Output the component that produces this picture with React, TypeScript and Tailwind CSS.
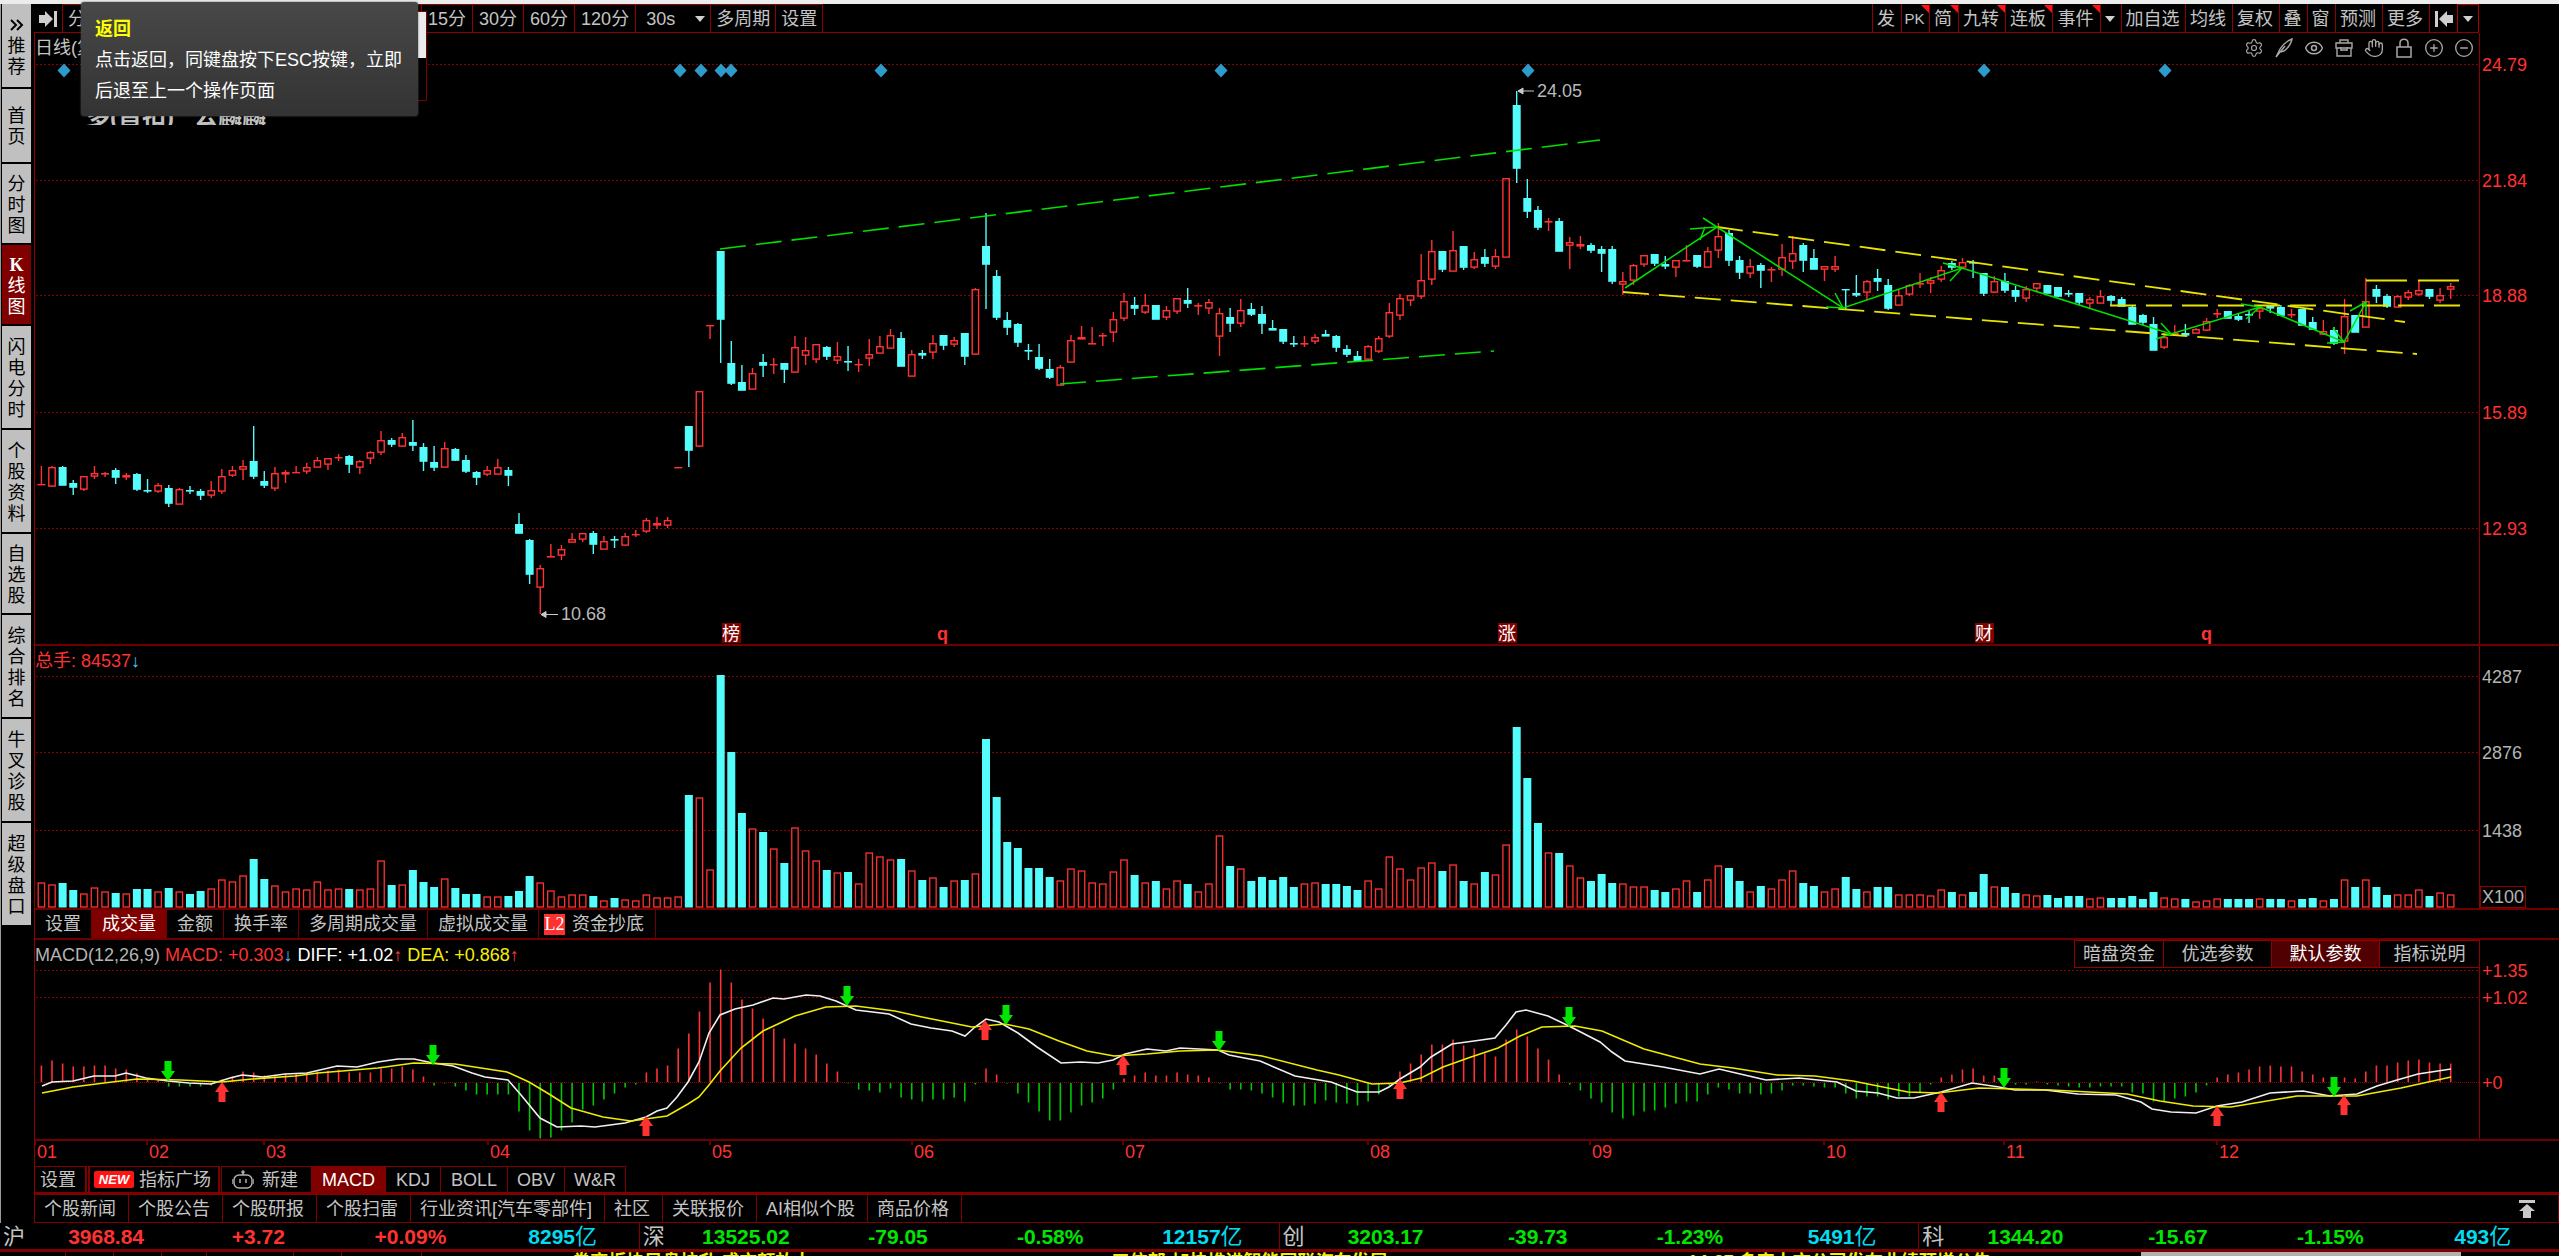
import React from 'react';
import { Eye, Hand, CirclePlus, CircleMinus, Settings } from 'lucide-react';

const RED = '#ff3232';
const CYAN = '#54fcfc';
const GRID = '#8a0000';

// [up, high, bodyTop, bodyBottom, low, volume, macd], all in plot units
type Bar = [number, number, number, number, number, number, number];

const bars: Bar[] = [
  [1, 466, 484, 484, 484, 25, 17], [1, 466, 467, 486, 487, 23, 22], [0, 466, 467, 485, 485, 24, 19], [0, 480, 483, 487, 495, 17, 16],
  [1, 476, 476, 489, 491, 14, 16], [1, 466, 473, 476, 479, 20, 17], [1, 472, 473, 474, 477, 16, 17], [0, 468, 470, 477, 484, 14, 14],
  [1, 473, 475, 477, 480, 14, 13], [0, 473, 474, 489, 491, 18, 9], [0, 479, 490, 491, 493, 18, 4], [1, 483, 485, 491, 493, 16, 2],
  [0, 485, 488, 503, 507, 19, -4], [1, 488, 489, 504, 504, 16, -4], [0, 486, 490, 491, 494, 13, -4], [0, 489, 491, 495, 500, 16, -4],
  [1, 481, 490, 495, 498, 19, -3], [1, 469, 476, 491, 494, 28, 3], [1, 466, 470, 475, 477, 26, 6], [1, 460, 466, 469, 480, 32, 11],
  [0, 426, 461, 476, 479, 48, 10], [0, 471, 481, 485, 488, 28, 7], [1, 467, 473, 488, 491, 22, 7], [1, 470, 472, 474, 483, 16, 9],
  [1, 466, 472, 472, 472, 19, 9], [1, 463, 467, 471, 474, 18, 10], [1, 457, 460, 467, 467, 26, 11], [1, 458, 458, 464, 470, 18, 12],
  [1, 454, 457, 457, 461, 19, 13], [0, 455, 456, 464, 473, 18, 10], [1, 460, 461, 467, 474, 18, 10], [1, 451, 452, 458, 464, 19, 10],
  [1, 431, 440, 452, 455, 47, 14], [0, 438, 440, 444, 447, 22, 14], [1, 433, 437, 446, 447, 23, 16], [0, 420, 442, 445, 451, 37, 13],
  [0, 443, 447, 461, 471, 25, 6], [0, 446, 462, 467, 471, 20, -3], [1, 442, 448, 467, 467, 29, -1], [0, 448, 449, 460, 461, 19, -4],
  [0, 455, 460, 471, 473, 13, -8], [0, 471, 472, 477, 485, 13, -12], [1, 466, 470, 474, 476, 11, -12], [1, 459, 467, 474, 474, 11, -12],
  [0, 467, 470, 475, 486, 11, -12], [0, 513, 524, 533, 533, 16, -29], [0, 539, 540, 574, 584, 31, -48], [1, 565, 568, 587, 614, 25, -56],
  [1, 544, 556, 557, 557, 17, -55], [1, 545, 549, 555, 560, 11, -48], [1, 533, 539, 542, 542, 13, -40], [1, 533, 533, 539, 542, 13, -27],
  [0, 531, 533, 544, 554, 11, -23], [1, 536, 541, 549, 549, 7, -17], [0, 536, 539, 540, 548, 9, -11], [1, 533, 536, 545, 545, 8, -5],
  [1, 530, 534, 534, 537, 7, -2], [1, 518, 520, 531, 533, 13, 10], [1, 517, 523, 525, 529, 10, 14], [1, 517, 520, 525, 528, 10, 17],
  [1, 467, 467, 467, 467, 11, 34], [0, 426, 426, 450, 467, 112, 49], [1, 391, 391, 446, 447, 110, 71], [1, 325, 325, 325, 339, 38, 100],
  [0, 251, 251, 319, 363, 232, 113], [0, 341, 363, 383, 385, 155, 100], [0, 365, 382, 390, 390, 94, 83], [1, 368, 373, 389, 389, 79, 74],
  [0, 354, 362, 365, 377, 75, 64], [1, 358, 364, 364, 374, 59, 54], [0, 363, 363, 369, 383, 44, 44], [1, 336, 347, 372, 372, 80, 39],
  [1, 337, 350, 355, 365, 57, 34], [1, 344, 344, 359, 363, 47, 28], [0, 346, 347, 356, 360, 37, 19], [1, 342, 356, 360, 364, 35, 11],
  [0, 346, 361, 362, 371, 35, -1], [1, 359, 364, 364, 372, 24, -7], [1, 339, 354, 358, 366, 55, -8], [1, 336, 346, 353, 353, 51, -10],
  [1, 329, 335, 348, 348, 48, -6], [0, 332, 338, 366, 366, 48, -15], [1, 350, 354, 376, 376, 37, -17], [0, 350, 353, 355, 359, 27, -19],
  [1, 335, 343, 352, 359, 30, -17], [0, 335, 335, 345, 350, 20, -17], [1, 337, 340, 344, 347, 27, -15], [0, 333, 333, 356, 365, 27, -19],
  [1, 288, 289, 354, 355, 34, -2], [0, 213, 246, 264, 309, 168, 14], [0, 270, 276, 317, 320, 110, 8], [0, 312, 320, 327, 335, 65, -1],
  [0, 323, 324, 342, 347, 59, -11], [0, 344, 350, 351, 360, 39, -20], [0, 344, 357, 368, 370, 39, -29], [0, 359, 369, 377, 379, 30, -38],
  [1, 365, 367, 385, 385, 27, -38], [1, 335, 340, 362, 362, 39, -30], [1, 326, 337, 339, 339, 37, -23], [1, 327, 343, 344, 344, 25, -20],
  [1, 333, 335, 336, 346, 24, -16], [1, 312, 319, 332, 342, 36, -7], [1, 293, 301, 318, 321, 48, 4], [0, 297, 305, 308, 315, 32, 7],
  [1, 294, 305, 312, 314, 25, 10], [0, 305, 305, 319, 319, 26, 7], [1, 306, 310, 317, 320, 19, 7], [1, 298, 298, 311, 314, 27, 10],
  [0, 288, 300, 303, 308, 23, 8], [1, 303, 305, 306, 315, 16, 7], [1, 299, 302, 308, 314, 24, 5], [1, 308, 313, 336, 356, 72, -1],
  [0, 308, 317, 323, 332, 41, -7], [1, 299, 310, 323, 327, 39, -7], [0, 303, 309, 314, 316, 26, -8], [0, 306, 314, 323, 334, 30, -11],
  [0, 320, 328, 330, 330, 27, -15], [0, 329, 329, 341, 344, 30, -20], [0, 336, 343, 344, 347, 20, -23], [1, 336, 343, 344, 347, 24, -23],
  [1, 334, 337, 341, 344, 25, -21], [0, 330, 334, 336, 336, 23, -18], [0, 335, 336, 347, 352, 23, -20], [0, 345, 349, 354, 357, 21, -21],
  [0, 351, 356, 361, 361, 17, -23], [1, 345, 346, 359, 360, 27, -19], [1, 336, 338, 351, 353, 19, -12], [1, 303, 312, 336, 338, 51, -3],
  [1, 294, 298, 315, 320, 39, 11], [1, 295, 295, 300, 306, 28, 19], [1, 254, 280, 296, 299, 40, 28], [1, 240, 251, 279, 285, 45, 38],
  [0, 251, 251, 269, 272, 36, 38], [1, 231, 250, 271, 271, 43, 43], [0, 246, 246, 267, 270, 26, 37], [1, 252, 259, 267, 269, 24, 34],
  [0, 249, 257, 263, 267, 35, 29], [1, 249, 256, 266, 269, 33, 26], [1, 178, 178, 257, 257, 63, 43], [0, 91, 105, 168, 183, 180, 53],
  [0, 179, 198, 211, 218, 129, 46], [0, 206, 210, 227, 230, 84, 34], [1, 218, 221, 222, 231, 55, 23], [0, 218, 221, 251, 251, 54, 8],
  [1, 237, 242, 245, 269, 42, -2], [1, 236, 244, 246, 249, 30, -8], [0, 243, 245, 250, 253, 26, -16], [0, 246, 249, 253, 272, 33, -20],
  [0, 246, 249, 281, 284, 24, -30], [1, 272, 281, 284, 295, 24, -36], [1, 264, 265, 280, 285, 21, -33], [1, 255, 255, 264, 267, 21, -29],
  [0, 254, 254, 263, 266, 17, -28], [0, 256, 264, 266, 269, 15, -25], [1, 260, 260, 267, 277, 19, -21], [1, 245, 260, 261, 261, 27, -19],
  [0, 255, 255, 266, 268, 15, -19], [1, 247, 251, 267, 267, 28, -12], [1, 223, 236, 250, 258, 42, -5], [0, 230, 233, 260, 266, 39, -7],
  [0, 256, 260, 272, 279, 26, -11], [1, 259, 266, 273, 278, 16, -11], [0, 263, 265, 270, 288, 21, -12], [1, 267, 269, 270, 282, 19, -11],
  [1, 244, 257, 269, 276, 28, -8], [1, 236, 253, 261, 269, 37, -3], [0, 243, 245, 260, 272, 24, -3], [0, 249, 258, 269, 269, 21, -4],
  [1, 266, 266, 269, 281, 16, -5], [1, 256, 266, 269, 272, 19, -5], [0, 289, 289, 289, 309, 30, -11], [0, 275, 293, 295, 297, 18, -16],
  [1, 280, 281, 292, 300, 16, -14], [0, 269, 278, 281, 291, 20, -14], [0, 279, 285, 308, 310, 20, -17], [1, 290, 295, 305, 305, 13, -14],
  [1, 284, 285, 294, 296, 13, -14], [1, 273, 283, 284, 288, 13, -10], [1, 277, 280, 283, 293, 12, -2], [1, 266, 270, 279, 282, 18, 5],
  [0, 261, 263, 267, 270, 15, 8], [1, 258, 262, 267, 268, 13, 13], [0, 260, 262, 263, 278, 15, 14], [0, 273, 273, 293, 296, 33, 7],
  [1, 276, 281, 292, 293, 21, 7], [0, 273, 281, 290, 293, 20, -2], [0, 286, 290, 296, 302, 14, -2], [1, 286, 289, 298, 302, 13, -2],
  [1, 283, 283, 288, 291, 12, 1], [0, 285, 285, 293, 293, 12, -2], [0, 287, 287, 296, 297, 9, -3], [0, 290, 293, 294, 297, 11, -4],
  [0, 293, 293, 302, 305, 11, -5], [1, 297, 299, 303, 308, 9, -5], [1, 290, 296, 303, 303, 10, -4], [0, 295, 296, 300, 305, 9, -4],
  [0, 297, 299, 306, 306, 9, -4], [0, 306, 307, 324, 324, 11, -10], [0, 314, 315, 322, 325, 8, -11], [0, 317, 324, 350, 350, 15, -19],
  [1, 333, 337, 347, 349, 10, -19], [1, 325, 333, 335, 335, 9, -16], [0, 324, 333, 335, 336, 8, -14], [1, 328, 329, 333, 333, 6, -10],
  [1, 318, 321, 330, 331, 7, -3], [1, 309, 313, 314, 318, 9, 5], [0, 311, 311, 318, 318, 8, 8], [0, 314, 316, 319, 321, 8, 10],
  [0, 310, 314, 315, 323, 8, 13], [1, 306, 308, 311, 319, 9, 16], [0, 306, 306, 308, 313, 8, 17], [0, 305, 307, 315, 315, 8, 16],
  [1, 309, 314, 315, 318, 7, 16], [0, 309, 309, 325, 325, 8, 11], [0, 317, 322, 329, 330, 9, 8], [1, 320, 331, 334, 335, 7, 5],
  [0, 327, 330, 343, 345, 8, 2], [1, 299, 316, 341, 354, 28, 5], [0, 315, 315, 332, 332, 20, 4], [1, 278, 301, 327, 327, 28, 11],
  [0, 285, 289, 296, 303, 20, 17], [0, 294, 296, 306, 308, 12, 17], [1, 295, 296, 307, 307, 13, 20], [1, 290, 292, 297, 300, 13, 22],
  [1, 280, 290, 294, 296, 18, 23], [0, 289, 289, 296, 299, 11, 20], [1, 288, 295, 300, 303, 15, 19], [1, 283, 286, 289, 299, 13, 19],
];

const barX = (i: number) => 41.4 + i * 10.6137;

const diff =
  '42,1086 52,1082 73,1081 94,1076 115,1076 126,1073 146,1078 168,1081 189,1083 211,1084 230,1078 242,1075 263,1077 285,1074 307,1073 337,1066 357,1067 378,1062 398,1059 414,1059 433,1063 453,1066 472,1073 485,1077 508,1080 521,1095 540,1118 557,1127 581,1126 595,1127 625,1123 646,1117 657,1111 667,1108 677,1097 688,1082 699,1062 709,1033 720,1015 735,1009 753,1005 773,998 784,999 806,995 820,996 836,1001 847,1006 856,1010 889,1014 911,1024 931,1028 952,1031 965,1036 975,1027 986,1019 999,1022 1018,1033 1037,1047 1061,1063 1081,1062 1098,1063 1113,1060 1125,1054 1147,1049 1166,1051 1180,1048 1218,1050 1229,1055 1260,1061 1295,1076 1331,1082 1357,1092 1379,1092 1389,1087 1400,1079 1420,1067 1431,1057 1452,1044 1474,1041 1495,1038 1506,1025 1516,1012 1526,1010 1548,1016 1569,1026 1600,1042 1612,1052 1625,1061 1663,1067 1700,1074 1719,1069 1736,1073 1766,1080 1799,1078 1837,1082 1856,1091 1878,1093 1897,1098 1914,1098 1941,1092 1972,1083 1999,1087 2015,1090 2045,1090 2078,1094 2116,1095 2141,1102 2152,1109 2171,1112 2196,1113 2217,1106 2242,1102 2270,1093 2303,1091 2330,1096 2357,1094 2377,1086 2397,1080 2418,1074 2451,1069';

const dea =
  '42,1093 73,1087 104,1083 137,1079 181,1080 222,1082 252,1079 295,1076 318,1073 378,1068 414,1063 455,1064 507,1072 529,1082 549,1094 571,1108 603,1117 631,1121 667,1116 688,1104 699,1097 709,1085 720,1071 741,1048 763,1031 795,1016 826,1007 856,1006 895,1011 922,1017 972,1027 1005,1024 1029,1029 1059,1041 1087,1051 1114,1056 1147,1054 1180,1051 1218,1050 1262,1056 1317,1070 1339,1075 1372,1084 1400,1083 1421,1078 1443,1067 1471,1057 1498,1048 1520,1036 1542,1027 1575,1026 1602,1031 1644,1049 1700,1064 1733,1068 1777,1075 1815,1076 1853,1081 1908,1092 1938,1093 1979,1088 2051,1090 2127,1094 2160,1101 2193,1106 2231,1107 2297,1096 2357,1096 2401,1088 2451,1077';

const sellMarks = [[168, 1081], [433, 1065], [847, 1006], [1006, 1025], [1219, 1051], [1569, 1027], [2004, 1088], [2334, 1097]];
const buyMarks = [[222, 1082], [646, 1116], [985, 1020], [1123, 1055], [1400, 1079], [1941, 1092], [2217, 1106], [2344, 1095]];
const diamonds = [64, 680, 701, 721, 731, 881, 1221, 1528, 1984, 2165];
const months: [string, number][] = [
  ['01', 35], ['02', 147], ['03', 264], ['04', 488], ['05', 710], ['06', 912], ['07', 1123], ['08', 1368], ['09', 1590], ['10', 1824], ['11', 2004], ['12', 2217],
];

const sideTabs = [
  { label: '首页', size: 'h-[75px]' },
  { label: '分时图', size: 'h-[81px]' },
  { label: 'K线图', size: 'h-[81px]', active: true },
  { label: '闪电分时', size: 'h-[104px]' },
  { label: '个股资料', size: 'h-[104px]' },
  { label: '自选股', size: 'h-[81px]' },
  { label: '综合排名', size: 'h-[104px]' },
  { label: '牛叉诊股', size: 'h-[104px]' },
  { label: '超级盘口', size: 'h-[104px]' },
];

const rightTools = [
  { label: '发', size: 'w-[29px]' },
  { label: 'PK', size: 'w-[28px]', hot: true, small: true },
  { label: '简', size: 'w-[29px]', hot: true },
  { label: '九转', size: 'w-[47px]', hot: true },
  { label: '连板', size: 'w-[47px]', hot: true },
  { label: '事件', size: 'w-[48px]', hot: true },
  { label: '▾', size: 'w-[21px]' },
  { label: '加自选', size: 'w-[64px]' },
  { label: '均线', size: 'w-[47px]' },
  { label: '复权', size: 'w-[47px]' },
  { label: '叠', size: 'w-[28px]' },
  { label: '窗', size: 'w-[28px]' },
  { label: '预测', size: 'w-[47px]' },
  { label: '更多', size: 'w-[47px]' },
];

const indices = [
  { name: '沪', last: '3968.84', chg: '+3.72', pct: '+0.09%', amount: '8295', up: true },
  { name: '深', last: '13525.02', chg: '-79.05', pct: '-0.58%', amount: '12157', up: false },
  { name: '创', last: '3203.17', chg: '-39.73', pct: '-1.23%', amount: '5491', up: false },
  { name: '科', last: '1344.20', chg: '-15.67', pct: '-1.15%', amount: '493', up: false },
];

const Caret = () => (
  <svg width="10" height="6" viewBox="0 0 10 6" fill="#d0d0d0"><path d="M0 0h10L5 6z" /></svg>
);

const GridLine = ({ y, dash = '2 2' }: { y: number; dash?: string }) => (
  <line x1="36" x2="2479" y1={y} y2={y} stroke={GRID} strokeDasharray={dash} shapeRendering="crispEdges" />
);

const Candle = ({ bar, x }: { bar: Bar; x: number }) => {
  const [up, high, top, bottom, low] = bar;
  const color = up ? RED : CYAN;
  const thin = bottom - top < 3;
  return (
    <g stroke={color} strokeWidth="1.4" fill="none">
      {high < top && <line x1={x} x2={x} y1={high} y2={top} />}
      {low > bottom && <line x1={x} x2={x} y1={bottom} y2={low} />}
      {thin ? (
        <rect x={x - 4} y={top} width="8" height={Math.max(1.4, bottom - top + 0.6)} fill={color} stroke="none" />
      ) : up ? (
        <rect x={x - 3.2} y={top + 0.7} width="6.4" height={bottom - top - 0.6} />
      ) : (
        <rect x={x - 4} y={top} width="8" height={bottom - top + 0.8} fill={color} stroke="none" />
      )}
    </g>
  );
};

const PriceChart = () => (
  <svg className="block w-full h-[581px]" viewBox="35 63 2444 581" preserveAspectRatio="none">
    {[64, 180, 295, 412, 528].map((y) => <GridLine key={y} y={y + 0.5} />)}
    {diamonds.map((x) => (
      <path key={x} d={`M${x} 63.5l6.5 7-6.5 7-6.5-7z`} fill="#2e9cca" />
    ))}
    {bars.map((bar, i) => <Candle key={i} bar={bar} x={barX(i)} />)}

    {/* trend channels */}
    <g stroke="#00e000" strokeWidth="1.6" strokeDasharray="26 10" fill="none">
      <path d="M720 249L1600 140" />
      <path d="M1060 384L1494 351" />
    </g>
    <g stroke="#e8e400" strokeWidth="1.8" strokeDasharray="26 10" fill="none">
      <path d="M1717 227L2405 322" />
      <path d="M1623 292L2417 354" />
      <path d="M2366 280.5H2464" strokeDasharray="41 11" />
      <path d="M2110 305.5H2461" strokeDasharray="26 10" />
    </g>
    <g stroke="#00e000" strokeWidth="1.5" fill="none">
      <path d="M1625 288L1717 227L1843 308L1962 268L2171 334L2260 307L2344 342L2366 302" />
      <path d="M1703 218L1717 227L1690 229M1700 240L1705 227" />
      <path d="M1835 293L1843 308L1826 307" />
      <path d="M1943 263L1962 268L1950 281" />
      <path d="M2161 323L2171 334L2156 339" />
      <path d="M2241 304L2260 307L2246 319" />
      <path d="M2333 328L2344 342L2327 343" />
      <path d="M2350 311L2366 302L2366 316" />
    </g>

    {/* extremes */}
    <g stroke="#c8c8c8" fill="#c8c8c8">
      <path d="M1518 91H1534M1518 91l5-3v6z" />
      <path d="M541 614.5H558M541 614.5l5-3v6z" />
    </g>
    <g fill="#b8b8b8" fontSize="18">
      <text x="1537" y="97">24.05</text>
      <text x="561" y="620">10.68</text>
    </g>

    {/* event badges */}
    {([['榜', 722], ['涨', 1498], ['财', 1975]] as [string, number][]).map(([t, x]) => (
      <g key={t}>
        <rect x={x} y="623" width="19" height="20" fill="#800000" />
        <text x={x} y="640" fontSize="18" fill="#fff">{t}</text>
      </g>
    ))}
    <g fill={RED} fontSize="18" fontWeight="700">
      <text x="937" y="640">q</text>
      <text x="2201" y="640">q</text>
    </g>
  </svg>
);

const VolumeChart = () => (
  <svg className="block w-full h-[236px]" viewBox="35 672 2444 236" preserveAspectRatio="none">
    {[676, 752, 830].map((y) => <GridLine key={y} y={y + 0.5} />)}
    {bars.map(([up, , , , , vol], i) =>
      up ? (
        <rect key={i} x={barX(i) - 3.2} y={908 - vol} width="6.4" height={vol - 1} fill="#000" stroke={RED} strokeWidth="1.3" />
      ) : (
        <rect key={i} x={barX(i) - 4} y={907 - vol} width="8" height={vol + 0.5} fill={CYAN} />
      ),
    )}
  </svg>
);

const MacdChart = () => (
  <svg className="block w-full h-[171px]" viewBox="35 968 2444 171" preserveAspectRatio="none">
    <GridLine y={970.5} />
    <GridLine y={997.5} />
    <GridLine y={1082.5} dash="1 1" />
    {bars.map((b, i) => (
      <line key={i} x1={barX(i)} x2={barX(i)} y1={b[6] > 0 ? 1082 : 1083} y2={1082.5 - b[6]} stroke={b[6] > 0 ? RED : '#00c800'} strokeWidth="1.6" />
    ))}
    <polyline points={diff} fill="none" stroke="#f0f0f0" strokeWidth="1.6" />
    <polyline points={dea} fill="none" stroke="#f0ec00" strokeWidth="1.6" />
    {sellMarks.map(([x, y]) => (
      <path key={x} d={`M${x} ${y}l-7-10h3.5v-10h7v10h3.5z`} fill="#00e600" />
    ))}
    {buyMarks.map(([x, y]) => (
      <path key={x} d={`M${x} ${y}l-7 10h3.5v10h7v-10h3.5z`} fill="#ff3232" />
    ))}
  </svg>
);

const Axis = ({ labels, top, height, className }: { labels: [string, number][]; top: number; height: number; className: string }) => (
  <svg width="79" height={height} viewBox={`0 ${top} 79 ${height}`} className={className} fontSize="18">
    {labels.map(([t, y]) => <text key={t} x="2" y={y + 7}>{t}</text>)}
  </svg>
);

const App = () => {
  return (
    <div className="h-screen overflow-hidden bg-black text-[#c4c4c4] text-[18px] leading-[24px] flex flex-col relative font-['Liberation_Sans','Noto_Sans_CJK_SC',sans-serif] whitespace-nowrap">
      <div className="h-1 shrink-0 bg-[#ececec]" />

      <div className="flex shrink-0">
        {/* Left navigation */}
        <nav className="w-[34px] shrink-0 border-l border-[#9a9a9a] pl-px">
          <button className="w-[29px] h-[85px] bg-[#c0c0c0] text-black border-b-2 border-black flex flex-col items-center justify-center leading-[21px]">
            <svg width="14" height="12" viewBox="0 0 14 12" fill="none" stroke="#000" strokeWidth="2" className="my-[5px]">
              <path d="M1 1l5 5-5 5M7 1l5 5-5 5" />
            </svg>
            <span>推</span>
            <span>荐</span>
          </button>
          {sideTabs.map((tab) => (
            <button
              key={tab.label}
              className={`w-[29px] ${tab.size} pt-[3px] flex flex-col items-center justify-center leading-[21px] border-b-2 border-black ${tab.active ? 'bg-[#800000] text-white' : 'bg-[#c0c0c0] text-black'}`}
            >
              {tab.label.split('').map((ch, i) => (
                <span key={i} className={ch === 'K' ? "font-['Liberation_Serif',serif] font-bold" : ''}>{ch}</span>
              ))}
            </button>
          ))}
        </nav>

        <div className="flex-1 min-w-0">
          {/* Toolbar */}
          <div className="h-[29px] flex justify-between pr-[80px] relative">
            <div className="absolute inset-x-0 bottom-0 mr-[80px] border-b border-[#900000]" />
            <div className="flex">
              <button aria-label="展开" className="w-[28px] pl-[5px]">
                <svg width="19" height="18" viewBox="0 0 19 18" fill="#cfcfcf"><path d="M0 5h6V1l8 8-8 8v-4H0zM15 1h3v16h-3z" /></svg>
              </button>
              <button className="w-[359px] text-left pl-[5px] border-l border-t border-[#900000]">分时</button>
              <button className="px-[6px] border-l border-t border-[#900000]">15分</button>
              <button className="px-[6px] border-l border-t border-[#900000]">30分</button>
              <button className="px-[6px] border-l border-t border-[#900000]">60分</button>
              <button className="px-[6px] border-l border-t border-[#900000]">120分</button>
              <label className="w-[75px] border-l border-t border-[#900000] flex items-center justify-between pl-[10px] pr-[5px]">
                <select aria-label="周期" className="appearance-none bg-transparent outline-none w-[36px]" defaultValue="30s">
                  <option>30s</option>
                </select>
                <Caret />
              </label>
              <button className="px-[5px] border-l border-t border-[#900000]">多周期</button>
              <button className="px-[5px] border-x border-t border-[#900000]">设置</button>
            </div>
            <div className="flex">
              {rightTools.map((tool) => (
                <button key={tool.label} className={`${tool.size} pr-[2px] relative border-l border-[#900000] flex items-center justify-center ${tool.small ? 'text-[15px]' : ''}`}>
                  {tool.label === '▾' ? <Caret /> : tool.label}
                  {tool.hot && (
                    <svg width="8" height="8" viewBox="0 0 8 8" className="absolute right-0 top-px" fill="#ff1414"><path d="M0 0h8v8z" /></svg>
                  )}
                </button>
              ))}
              <button aria-label="收起" className="w-[28px] border-l border-[#900000] flex items-center justify-center">
                <svg width="19" height="18" viewBox="0 0 19 18" fill="#cfcfcf"><path d="M19 5h-6V1L5 9l8 8v-4h6zM1 1h3v16H1z" /></svg>
              </button>
              <button aria-label="菜单" className="w-[22px] border border-[#b00000] flex items-center justify-center"><Caret /></button>
            </div>
          </div>

          {/* Price panel */}
          <div className="border-l border-[#900000]">
            <section className="flex border-b-2 border-[#700000]">
              <div className="flex-1 min-w-0">
                <div className="h-[30px] flex items-center justify-between">
                  <span>日线(复权)</span>
                  <div className="flex gap-[10px] pr-[5px] text-[#a8a8a8]">
                    <button aria-label="设置"><Settings size={20} strokeWidth={1.4} /></button>
                    <button aria-label="画线">
                      <svg width="20" height="20" viewBox="0 0 20 20" fill="none" stroke="currentColor" strokeWidth="1.4">
                        <path d="M2 19l4-8c3-5 7-8 12-10-1 5-4 9-8 12l-4 1zM2 19l9-11" />
                      </svg>
                    </button>
                    <button aria-label="显示"><Eye size={20} strokeWidth={1.8} /></button>
                    <button aria-label="工具">
                      <svg width="20" height="20" viewBox="0 0 20 20" fill="none" stroke="currentColor" strokeWidth="1.4">
                        <path d="M2 5h16v5H2zM3 10v8h14v-8M6 5V2h8v3M7 9v4M13 9v4M7 12h6" />
                      </svg>
                    </button>
                    <button aria-label="拖动"><Hand size={20} strokeWidth={1.6} /></button>
                    <button aria-label="锁定">
                      <svg width="20" height="20" viewBox="0 0 20 20" fill="none" stroke="currentColor" strokeWidth="1.5">
                        <path d="M3 9h14v10H3zM6 9V5c0-5 8-5 8 0v4" />
                      </svg>
                    </button>
                    <button aria-label="放大"><CirclePlus size={20} strokeWidth={1.6} /></button>
                    <button aria-label="缩小"><CircleMinus size={20} strokeWidth={1.6} /></button>
                  </div>
                </div>
                <PriceChart />
              </div>
              <div className="w-[80px] border-l border-[#900000]">
                <Axis
                  className="fill-[#ff3232]"
                  top={33}
                  height={611}
                  labels={[['24.79', 64], ['21.84', 180], ['18.88', 295], ['15.89', 412], ['12.93', 528]]}
                />
              </div>
            </section>

            {/* Volume panel */}
            <section className="flex border-b-2 border-[#700000]">
              <div className="flex-1 min-w-0">
                <div className="h-[26px] pt-[3px] text-[#ff3232]">总手: 84537<span className="text-[#54c8fc]">↓</span></div>
                <VolumeChart />
              </div>
              <div className="w-[80px] border-l border-[#900000] flex flex-col justify-between">
                <Axis className="fill-[#b4b4b4]" top={646} height={230} labels={[['4287', 676], ['2876', 752], ['1438', 830]]} />
                <div className="self-start border border-[#900000] h-[22px] leading-[20px] px-px text-[#b4b4b4]">X100</div>
              </div>
            </section>

            <div className="h-[30px] flex border-b-2 border-[#700000]">
              <button className="px-[10px] border-r border-[#700000]">设置</button>
              <button className="px-[10px] border-r border-[#700000] bg-[#800000] text-white">成交量</button>
              <button className="px-[10px] border-r border-[#700000]">金额</button>
              <button className="px-[10px] border-r border-[#700000]">换手率</button>
              <button className="px-[10px] border-r border-[#700000]">多周期成交量</button>
              <button className="px-[10px] border-r border-[#700000]">虚拟成交量</button>
              <button className="pl-[5px] pr-[11px] border-r border-[#700000] flex items-center gap-[7px]">
                <span className="w-[21px] h-[21px] leading-[21px] bg-[#ff3030] text-white text-center font-['Liberation_Serif',serif]">L2</span>
                资金抄底
              </button>
            </div>

            {/* MACD panel */}
            <section className="flex border-b-2 border-[#700000]">
              <div className="flex-1 min-w-0">
                <div className="h-[28px] flex items-center justify-between">
                  <div className="flex gap-[5px] pt-[2px]">
                    <span className="text-[#b4b4b4]">MACD(12,26,9)</span>
                    <span className="text-[#ff3232]">MACD: +0.303<span className="text-[#54c8fc]">↓</span></span>
                    <span className="text-white">DIFF: +1.02<span className="text-[#ff4040]">↑</span></span>
                    <span className="text-[#f4f000]">DEA: +0.868<span className="text-[#ff4040]">↑</span></span>
                  </div>
                  <div className="flex h-full">
                    <button className="w-[90px] border border-[#900000]">暗盘资金</button>
                    <button className="w-[108px] border-y border-r border-[#900000]">优选参数</button>
                    <button className="w-[108px] border-y border-r border-[#900000] bg-[#500000] text-white">默认参数</button>
                    <button className="w-[99px] border-y border-[#900000]">指标说明</button>
                  </div>
                </div>
                <MacdChart />
              </div>
              <div className="w-[80px] border-l border-[#900000]">
                <Axis className="fill-[#ff3232]" top={940} height={199} labels={[['+1.35', 970], ['+1.02', 997], ['+0', 1082]]} />
              </div>
            </section>

            <div className="pr-[80px]">
              <svg className="block w-full h-[25px] fill-[#ff3232]" viewBox="35 1141 2444 25" preserveAspectRatio="none" fontSize="18">
                {months.map(([m, x]) => (
                  <g key={m}>
                    <line x1={x} x2={x} y1="1141" y2="1145" stroke="#900000" strokeWidth="1.4" />
                    <text x={x + 2} y="1158">{m}</text>
                  </g>
                ))}
              </svg>
            </div>

            {/* Indicator tabs */}
            <div className="h-[29px] flex border-b-[3px] border-[#800000]">
              <button className="pl-[5px] pr-[9px] border-t border-r-2 border-[#800000] mr-px">设置</button>
              <button className="pl-[4px] pr-[7px] border-t border-x-2 border-[#800000] mr-px flex items-center gap-[5px]">
                <span className="bg-[#ff1414] text-white text-[13px] leading-[17px] h-[17px] w-[40px] rounded-[2px] font-bold italic text-center">NEW</span>
                指标广场
              </button>
              <button className="pl-[10px] pr-[13px] border-t border-l border-[#800000] flex items-center gap-[8px]">
                <svg width="22" height="20" viewBox="0 0 22 20" fill="none" stroke="#b0b0b0" strokeWidth="1.5">
                  <rect x="2" y="5" width="18" height="13" rx="5" />
                  <path d="M0 9v5M22 9v5M11 5V2M8 9v4M14 9v4" />
                  <circle cx="11" cy="2" r="1" />
                </svg>
                新建
              </button>
              <button className="px-[11px] border-t border-[#800000] bg-[#800000] text-white">MACD</button>
              <button className="px-[10px] border-t border-r border-[#800000]">KDJ</button>
              <button className="px-[10px] border-t border-r border-[#800000]">BOLL</button>
              <button className="px-[9px] border-t border-r border-[#800000]">OBV</button>
              <button className="px-[9px] border-t border-r border-[#800000]">W&amp;R</button>
            </div>

            {/* Stock info tabs */}
            <div className="h-[28px] flex border-b border-r border-[#800000]">
              {['个股新闻', '个股公告', '个股研报', '个股扫雷', '行业资讯[汽车零部件]', '社区', '关联报价', 'AI相似个股', '商品价格'].map((t) => (
                <button key={t} className="pl-[9px] pr-[12px] border-r border-[#800000]">{t}</button>
              ))}
              <button aria-label="置顶" className="ml-auto mr-[22px]">
                <svg width="18" height="18" viewBox="0 0 18 18" fill="#c8c8c8"><path d="M1 0h16v3H1zM9 4l8 7h-4v7H5v-7H1z" /></svg>
              </button>
            </div>
          </div>
        </div>
      </div>

      {/* Index quotes */}
      <div className="grid grid-cols-4 h-[29px] shrink-0 border-b-[3px] border-[#800000] text-[21px] leading-[27px]">
        {indices.map((q) => (
          <div key={q.name} className="flex border-r border-[#800000] last:border-r-0">
            <span className="w-[30px] pl-[3px] text-[22px]">{q.name}</span>
            <div className={`flex-1 grid grid-cols-4 text-center font-bold ${q.up ? 'text-[#ff3232]' : 'text-[#00e600]'}`}>
              <span>{q.last}</span>
              <span>{q.chg}</span>
              <span>{q.pct}</span>
              <span className="text-[#00dcf0]">{q.amount}<span className="font-normal text-[22px]">亿</span></span>
            </div>
          </div>
        ))}
      </div>

      {/* News ticker, runs off the lower edge */}
      <div className="flex shrink-0 h-[26px] pl-[18px] leading-[21px] font-bold text-[#f4f000]">
        <div className="flex text-[#303030] font-normal">
          {['w-[48px]', 'w-[48px]', 'w-[48px]', 'w-[45px]', 'w-[87px]', 'w-[48px]', 'w-[80px]'].map((w, i) => (
            <span key={i} className={`${w} border-r border-[#800000]`} />
          ))}
        </div>
        <p className="flex-1 flex justify-around overflow-hidden">
          <span>券商板块早盘拉升 成交额放大</span>
          <span>工信部:加快推进智能网联汽车发展</span>
          <span>14:27 多家上市公司发布业绩预增公告</span>
        </p>
        <div className="w-[320px] mr-[98px] bg-[#b0b0b0]" />
      </div>

      {/* Panel behind the tooltip */}
      <div className="absolute left-[90px] top-[11px] w-[337px] h-[90px] bg-black border border-[#800000] flex flex-col">
        <div className="h-[46px] bg-[#ececec]" />
      </div>
      <div className="absolute left-[86px] top-[96px] h-[29px] overflow-hidden flex gap-[20px] text-[24px] leading-[42px] font-bold text-[#c0c0c0]">
        <span>多(首扣)</span>
        <span>公麟麟</span>
      </div>

      {/* Tooltip */}
      <div role="tooltip" className="absolute left-[81px] top-[2px] w-[337px] h-[114px] rounded-[3px] bg-linear-to-b from-[#484848] to-[#333333] px-[14px] pt-[12px] leading-[31px] text-white shadow-[0_0_2px_#555]">
        <strong className="block text-[#ffff00]">返回</strong>
        <p>点击返回，同键盘按下ESC按键，立即<br />后退至上一个操作页面</p>
      </div>
    </div>
  );
};

export default App;
